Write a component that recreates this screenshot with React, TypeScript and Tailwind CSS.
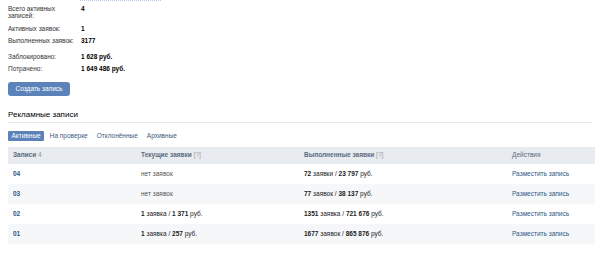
import React from "react";

type Row = {
  id: string;
  current: React.ReactNode;
  done: React.ReactNode;
};

const rows: Row[] = [
  {
    id: "04",
    current: <span className="text-[#555]">нет заявок</span>,
    done: (
      <>
        <b>72</b> заявки / <b>23 797</b> руб.
      </>
    ),
  },
  {
    id: "03",
    current: <span className="text-[#555]">нет заявок</span>,
    done: (
      <>
        <b>77</b> заявок / <b>38 137</b> руб.
      </>
    ),
  },
  {
    id: "02",
    current: (
      <>
        <b>1</b> заявка / <b>1 371</b> руб.
      </>
    ),
    done: (
      <>
        <b>1351</b> заявка / <b>721 676</b> руб.
      </>
    ),
  },
  {
    id: "01",
    current: (
      <>
        <b>1</b> заявка / <b>257</b> руб.
      </>
    ),
    done: (
      <>
        <b>1677</b> заявок / <b>865 876</b> руб.
      </>
    ),
  },
];

const tabs = ["Активные", "На проверке", "Отклонённые", "Архивные"];

function Stat({ label, value }: { label: string; value: string }) {
  return (
    <div className="flex leading-[7.5px]">
      <div className="w-[73px] shrink-0 text-[#333]">{label}</div>
      <div className="font-bold text-black">{value}</div>
    </div>
  );
}

export default function App() {
  return (
    <div className="w-[600px] h-[255px] overflow-hidden bg-white font-['Liberation_Sans',Arial,sans-serif] text-[6.5px] text-black">
      <div className="ml-[80px] w-[81px] border-b border-dotted border-[#b9cbe0]" />

      <div className="px-2">
        {/* Summary */}
        <div className="pt-[3.5px] flex flex-col gap-[5px]">
          <Stat label="Всего активных записей:" value="4" />
          <Stat label="Активных заявок:" value="1" />
          <Stat label="Выполненных заявок:" value="3177" />
          <div className="mt-[3px]">
            <Stat label="Заблокировано:" value="1 628 руб." />
          </div>
          <Stat label="Потрачено:" value="1 649 486 руб." />
        </div>

        <button className="mt-[9.5px] h-[14px] w-[62px] rounded-[3px] bg-[#5b82b9] text-white text-[6.5px] leading-[14px] text-center">
          Создать запись
        </button>

        {/* Ads */}
        <div className="mt-[14px] pb-[2px] border-b border-[#e7e8ec] text-[8px] leading-[10px] text-black">
          Рекламные записи
        </div>

        <div className="mt-[8px] flex gap-[2px]">
          {tabs.map((t, i) => (
            <div
              key={t}
              className={
                i === 0
                  ? "h-[10px] leading-[10px] px-[3.5px] rounded-[1px] bg-[#5b82b9] text-white"
                  : "h-[10px] leading-[10px] px-[3.5px] text-[#3f5a7d]"
              }
            >
              {t}
            </div>
          ))}
        </div>

        <table className="mt-[5.5px] w-[587px] table-fixed border-collapse">
          <colgroup>
            <col className="w-[128px]" />
            <col className="w-[163px]" />
            <col className="w-[208px]" />
            <col />
          </colgroup>
          <thead>
            <tr className="h-[17px] bg-[#e8ebef] text-left text-[#5b6b80]">
              <th className="pl-[5px] font-bold">
                Записи <span className="font-normal text-[#939393]">4</span>
              </th>
              <th className="pl-[5px] font-bold">
                Текущие заявки <span className="font-normal text-[#a0a0a0]">[?]</span>
              </th>
              <th className="pl-[5px] font-bold">
                Выполненные заявки <span className="font-normal text-[#a0a0a0]">[?]</span>
              </th>
              <th className="pl-[5px] font-normal">Действия</th>
            </tr>
          </thead>
          <tbody>
            {rows.map((r, i) => (
              <tr key={r.id} className={i % 2 === 1 ? "h-[20px] bg-[#f6f7f9]" : "h-[20px] bg-white"}>
                <td className="pl-[5px] font-bold text-[#2a5885]">{r.id}</td>
                <td className="pl-[5px] text-[#222]">{r.current}</td>
                <td className="pl-[5px] text-[#222]">{r.done}</td>
                <td className="pl-[5px] text-[#2a5885]">Разместить запись</td>
              </tr>
            ))}
          </tbody>
        </table>
      </div>
    </div>
  );
}
